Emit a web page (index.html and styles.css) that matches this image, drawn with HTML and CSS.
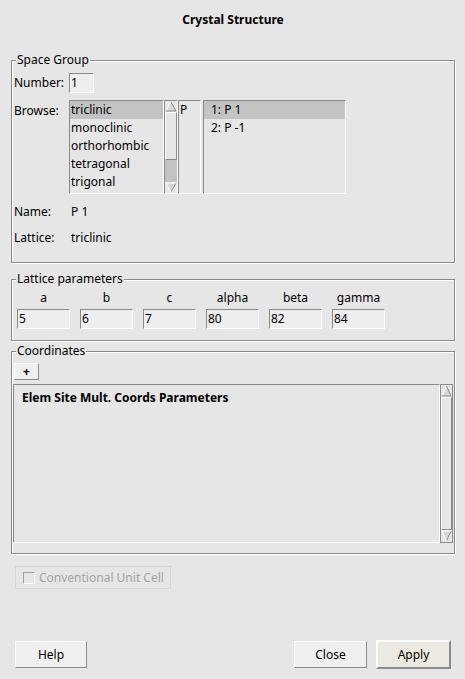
FILE: index.html
```html
<!DOCTYPE html>
<html>
<head>
<meta charset="utf-8">
<title>Crystal Structure</title>
<link rel="stylesheet" href="styles.css">
</head>
<body>
<div class="dialog">
  <div class="title">Crystal Structure</div>

  <div class="frame sg">
    <span class="frame-label">Space Group</span>
    <div class="row num-row">
      <span class="lbl">Number:</span>
      <div class="entry num-entry">1</div>
    </div>
    <div class="row browse-row">
      <span class="lbl browse-lbl">Browse:</span>
      <div class="list list-sys">
        <div class="item sel">triclinic</div>
        <div class="item">monoclinic</div>
        <div class="item">orthorhombic</div>
        <div class="item">tetragonal</div>
        <div class="item">trigonal</div>
      </div>
      <div class="vscroll vs-small">
        <div class="arrow"><svg width="12" height="11" viewBox="0 0 12 11"><polygon points="6,1 11,10 1,10" fill="#d6d6d6"/><polyline points="1,10 6,1" fill="none" stroke="#fff" stroke-width="1"/><polyline points="6,1 11,10 1,10" fill="none" stroke="#8a8a8a" stroke-width="1"/></svg></div>
        <div class="slider small-slider"></div>
        <div class="trough"></div>
        <div class="arrow"><svg width="12" height="11" viewBox="0 0 12 11"><polygon points="1,1 11,1 6,10" fill="#d6d6d6"/><polyline points="6,10 11,1" fill="none" stroke="#8a8a8a" stroke-width="1"/><polyline points="6,10 1,1 11,1" fill="none" stroke="#fff" stroke-width="1"/></svg></div>
      </div>
      <div class="list list-p">
        <div class="item">P</div>
      </div>
      <div class="list list-sg">
        <div class="item sel">1: P 1</div>
        <div class="item">2: P -1</div>
      </div>
    </div>
    <div class="row info-row first-info">
      <span class="lbl">Name:</span>
      <span class="val">P 1</span>
    </div>
    <div class="row info-row">
      <span class="lbl">Lattice:</span>
      <span class="val">triclinic</span>
    </div>
  </div>

  <div class="frame lattice">
    <span class="frame-label">Lattice parameters</span>
    <div class="params">
      <div class="param"><span class="plbl">a</span><div class="entry">5</div></div>
      <div class="param"><span class="plbl">b</span><div class="entry">6</div></div>
      <div class="param"><span class="plbl">c</span><div class="entry">7</div></div>
      <div class="param"><span class="plbl">alpha</span><div class="entry">80</div></div>
      <div class="param"><span class="plbl">beta</span><div class="entry">82</div></div>
      <div class="param"><span class="plbl">gamma</span><div class="entry">84</div></div>
    </div>
  </div>

  <div class="frame coords">
    <span class="frame-label">Coordinates</span>
    <div class="plus-btn">+</div>
    <div class="table-row">
      <div class="table">
        <div class="thead">Elem Site Mult. Coords Parameters</div>
      </div>
      <div class="vscroll vs-table">
        <div class="arrow"><svg width="11" height="12" viewBox="0 0 11 12"><polygon points="5.5,1 10,11 1,11" fill="#d6d6d6"/><polyline points="1,11 5.5,1" fill="none" stroke="#fff" stroke-width="1"/><polyline points="5.5,1 10,11 1,11" fill="none" stroke="#8a8a8a" stroke-width="1"/></svg></div>
        <div class="slider table-slider"></div>
        <div class="arrow"><svg width="11" height="12" viewBox="0 0 11 12"><polygon points="1,1 10,1 5.5,11" fill="#d6d6d6"/><polyline points="5.5,11 10,1" fill="none" stroke="#8a8a8a" stroke-width="1"/><polyline points="5.5,11 1,1 10,1" fill="none" stroke="#fff" stroke-width="1"/></svg></div>
      </div>
    </div>
  </div>

  <div class="check-wrap">
    <span class="cbox"></span>
    <span class="ctext">Conventional Unit Cell</span>
  </div>

  <div class="buttons">
    <div class="btn help">Help</div>
    <div class="btn close">Close</div>
    <div class="btn apply">Apply</div>
  </div>
</div>
</body>
</html>
```

FILE: styles.css
```css
* {
  box-sizing: border-box;
}

html, body {
  margin: 0;
  padding: 0;
}

body {
  background: #e6e6e6;
  font-family: "Noto Sans", "Open Sans", sans-serif;
  font-size: 12px;
  color: #000;
  width: 465px;
  height: 679px;
  overflow: hidden;
}

.dialog {
  padding: 0 10px 0 11px;
}

.title {
  height: 60px;
  padding-top: 11px;
  line-height: 18px;
  font-weight: bold;
  text-align: center;
}

/* groove frames */
.frame {
  position: relative;
  border: 1px solid #8a8a8a;
  box-shadow: inset 1px 1px 0 #fff, 1px 1px 0 #fff;
}

.frame-label {
  position: absolute;
  top: -9px;
  left: 4px;
  padding: 0 1px;
  line-height: 16px;
  background: #e6e6e6;
}

.row {
  display: flex;
}

.lbl {
  flex: 0 0 55px;
  width: 55px;
  line-height: 18px;
}

/* Space group frame */
.sg {
  padding: 12px 0 11px 2px;
}

.num-row {
  align-items: center;
  height: 20px;
}

.entry {
  height: 20px;
  line-height: 18px;
  padding-left: 1px;
  background: #eeeeee;
  border: 1px solid;
  border-color: #8a8a8a #fff #fff #8a8a8a;
}

.num-entry {
  width: 25px;
}

.browse-row {
  margin-top: 7px;
  height: 94px;
}

.browse-lbl {
  padding-top: 2px;
}

.info-row {
  height: 26px;
  align-items: center;
}

.first-info {
  margin-top: 5px;
}

.val {
  display: block;
  padding-left: 2px;
  line-height: 18px;
}

.list {
  height: 94px;
  overflow: hidden;
  border: 1px solid;
  border-color: #8a8a8a #fff #fff #8a8a8a;
}

.item {
  height: 18px;
  line-height: 18px;
  padding-left: 1px;
  white-space: nowrap;
}

.item.sel {
  background: #c3c3c3;
}

.list-sys {
  width: 95px;
}

.list-p {
  width: 23px;
}

.list-sg {
  width: 143px;
  margin-left: 2px;
}

.list-sg .item {
  padding-left: 7px;
}

/* scrollbars */
.vscroll {
  display: flex;
  flex-direction: column;
  background: #c3c3c3;
  border: 1px solid;
  border-color: #8a8a8a #fff #fff #8a8a8a;
}

.vs-small {
  width: 14px;
  height: 94px;
}

.arrow {
  flex: none;
  display: flex;
  background: #e6e6e6;
}

.arrow svg {
  display: block;
}

.slider {
  background: #e6e6e6;
  border: 1px solid;
  border-color: #fff #8a8a8a #8a8a8a #fff;
}

.small-slider {
  height: 48px;
  flex: none;
}

.trough {
  flex: 1;
}

/* Lattice frame */
.lattice {
  margin-top: 16px;
  padding: 9px 0 11px 5px;
}

.params {
  display: flex;
  gap: 10px;
}

.param {
  width: 53px;
  display: flex;
  flex-direction: column;
}

.plbl {
  text-align: center;
  line-height: 18px;
  height: 18px;
  margin-bottom: 2px;
}

/* Coordinates frame */
.coords {
  margin-top: 10px;
  padding: 11px 0 10px 0;
}

.plus-btn {
  width: 25px;
  height: 17px;
  margin-left: 2px;
  line-height: 15px;
  font-weight: bold;
  text-align: center;
  background: #efefef;
  border: 1px solid;
  border-color: #fff #8a8a8a #8a8a8a #fff;
}

.table-row {
  display: flex;
  margin-top: 4px;
  margin-left: 1px;
  height: 159px;
}

.table {
  width: 427px;
  border: 1px solid;
  border-color: #8a8a8a #fff #fff #8a8a8a;
  padding: 4px 0 0 8px;
}

.thead {
  font-weight: bold;
  line-height: 18px;
}

.vs-table {
  width: 13px;
  height: 159px;
  border-color: #8a8a8a;
}

.table-slider {
  flex: 1;
}

/* checkbox */
.check-wrap {
  display: flex;
  align-items: center;
  width: 156px;
  height: 23px;
  margin: 12px 0 0 4px;
  padding-left: 7px;
  border: 1px solid #d6d6d6;
  color: #a3a3a3;
}

.cbox {
  width: 12px;
  height: 12px;
  border: 1px solid;
  border-color: #a0a0a0 #fff #fff #a0a0a0;
  margin-right: 4px;
}

.ctext {
  line-height: 18px;
}

/* buttons */
.buttons {
  display: flex;
  align-items: center;
  margin-top: 51px;
  height: 29px;
}

.btn {
  height: 27px;
  line-height: 25px;
  text-align: center;
  background: #efefef;
  border: 1px solid;
  border-color: #fff #8a8a8a #8a8a8a #fff;
}

.help {
  width: 72px;
  margin-left: 4px;
}

.close {
  width: 73px;
  margin-left: auto;
}

.apply {
  width: 75px;
  height: 29px;
  line-height: 25px;
  margin-left: 9px;
  margin-right: 4px;
  background: #ece9e1;
  border-width: 2px;
  border-color: #fff #8a8a8a #8a8a8a #fff;
}
```
